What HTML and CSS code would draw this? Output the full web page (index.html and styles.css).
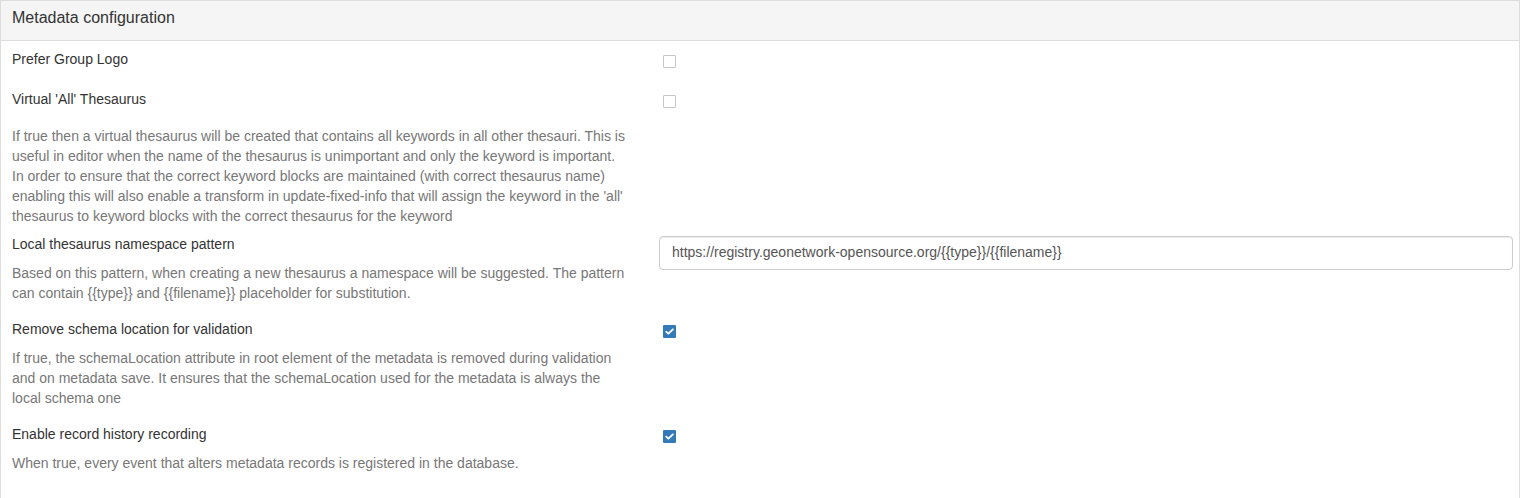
FILE: index.html
```html
<!DOCTYPE html>
<html lang="en">
<head>
<meta charset="utf-8">
<title>Metadata configuration</title>
<link rel="stylesheet" href="styles.css">
</head>
<body>
<div class="panel">
  <div class="panel-heading">Metadata configuration</div>
  <div class="panel-body">
    <div class="setting setting-nodesc">
      <label class="setting-label">Prefer Group Logo</label>
      <div class="setting-control"><span class="check"></span></div>
    </div>
    <div class="setting">
      <label class="setting-label">Virtual 'All' Thesaurus</label>
      <div class="setting-control"><span class="check"></span></div>
      <p class="help help-shifted">If true then a virtual thesaurus will be created that contains all keywords in all other thesauri. This is useful in editor when the name of the thesaurus is unimportant and only the keyword is important. In order to ensure that the correct keyword blocks are maintained (with correct thesaurus name) enabling this will also enable a transform in update-fixed-info that will assign the keyword in the 'all' thesaurus to keyword blocks with the correct thesaurus for the keyword</p>
    </div>
    <div class="setting">
      <label class="setting-label">Local thesaurus namespace pattern</label>
      <div class="setting-control"><input class="text-input" type="text" value="https://registry.geonetwork-opensource.org/{{type}}/{{filename}}"></div>
      <p class="help">Based on this pattern, when creating a new thesaurus a namespace will be suggested. The pattern can contain {{type}} and {{filename}} placeholder for substitution.</p>
    </div>
    <div class="setting">
      <label class="setting-label">Remove schema location for validation</label>
      <div class="setting-control"><span class="check checked"><svg viewBox="0 0 13 13" width="13" height="13"><path d="M3.2 6.6 L5.4 8.7 L9.9 4.3" fill="none" stroke="#fff" stroke-width="1.8" stroke-linecap="round" stroke-linejoin="round"/></svg></span></div>
      <p class="help">If true, the schemaLocation attribute in root element of the metadata is removed during validation and on metadata save. It ensures that the schemaLocation used for the metadata is always the local schema one</p>
    </div>
    <div class="setting">
      <label class="setting-label">Enable record history recording</label>
      <div class="setting-control"><span class="check checked"><svg viewBox="0 0 13 13" width="13" height="13"><path d="M3.2 6.6 L5.4 8.7 L9.9 4.3" fill="none" stroke="#fff" stroke-width="1.8" stroke-linecap="round" stroke-linejoin="round"/></svg></span></div>
      <p class="help">When true, every event that alters metadata records is registered in the database.</p>
    </div>
  </div>
</div>
</body>
</html>
```
FILE: styles.css
```css
html, body {
  margin: 0;
  padding: 0;
  background: #fff;
}
body {
  font-family: "Liberation Sans", Arial, sans-serif;
  color: #333;
}
.panel {
  border: 1px solid #ddd;
  border-bottom: none;
  min-height: 497px;
}
.panel-heading {
  background: #f5f5f5;
  border-bottom: 1px solid #ddd;
  padding: 7px 11px 12px;
  font-size: 16px;
  line-height: 20px;
  color: #333;
}
.panel-body {
  padding: 8px 6px 0 11px;
}
.setting {
  display: grid;
  grid-template-columns: 615px 1fr;
  column-gap: 32px;
  margin-bottom: 16px;
}
.setting-nodesc {
  margin-bottom: 20px;
}
.setting-label {
  grid-column: 1;
  grid-row: 1;
  font-size: 14px;
  line-height: 20px;
  color: #333;
}
.setting-control {
  grid-column: 2;
  grid-row: 1 / span 2;
  align-self: start;
}
.help {
  grid-column: 1;
  grid-row: 2;
  margin: 9px 0 0;
  font-size: 14px;
  line-height: 20px;
  color: #777;
}
.help-shifted {
  margin-top: 17px;
  margin-bottom: -8px;
}
.check {
  display: block;
  box-sizing: border-box;
  width: 13px;
  height: 13px;
  margin: 6px 0 0 4px;
  border: 1px solid #c6c6c6;
  border-radius: 1px;
  background: #fff;
}
.check.checked {
  border: none;
  background: #337ab7;
}
.check svg {
  display: block;
}
.text-input {
  display: block;
  box-sizing: border-box;
  width: 100%;
  height: 34px;
  margin-top: 2px;
  padding: 5px 12px 7px;
  border: 1px solid #ccc;
  border-radius: 4px;
  font-family: "Liberation Sans", Arial, sans-serif;
  font-size: 14px;
  color: #555;
  background: #fff;
  box-shadow: inset 0 1px 1px rgba(0,0,0,0.075);
}
```
